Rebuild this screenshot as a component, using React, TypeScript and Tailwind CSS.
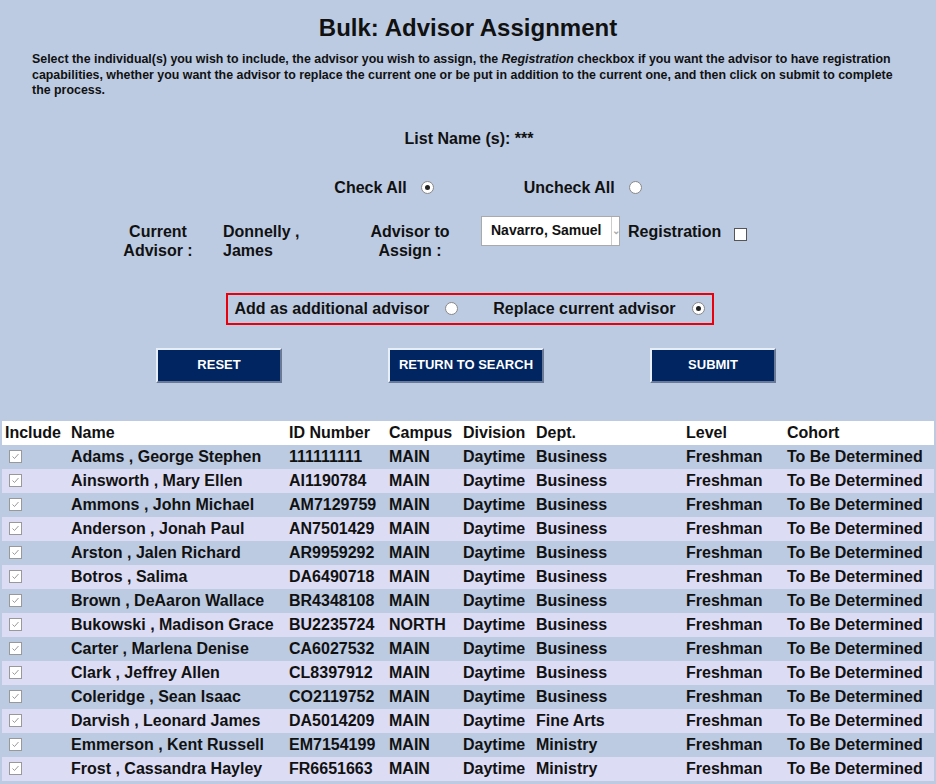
import React from "react";

const rows = [
  ["Adams , George Stephen","111111111","MAIN","Business"],
  ["Ainsworth , Mary Ellen","AI1190784","MAIN","Business"],
  ["Ammons , John Michael","AM7129759","MAIN","Business"],
  ["Anderson , Jonah Paul","AN7501429","MAIN","Business"],
  ["Arston , Jalen Richard","AR9959292","MAIN","Business"],
  ["Botros , Salima","DA6490718","MAIN","Business"],
  ["Brown , DeAaron Wallace","BR4348108","MAIN","Business"],
  ["Bukowski , Madison Grace","BU2235724","NORTH","Business"],
  ["Carter , Marlena Denise","CA6027532","MAIN","Business"],
  ["Clark , Jeffrey Allen","CL8397912","MAIN","Business"],
  ["Coleridge , Sean Isaac","CO2119752","MAIN","Business"],
  ["Darvish , Leonard James","DA5014209","MAIN","Fine Arts"],
  ["Emmerson , Kent Russell","EM7154199","MAIN","Ministry"],
  ["Frost , Cassandra Hayley","FR6651663","MAIN","Ministry"],
];

function Radio({ on }: { on?: boolean }) {
  return (
    <span className="inline-flex w-[13px] h-[13px] rounded-full border border-[#888] bg-white items-center justify-center">
      {on && <span className="w-[5px] h-[5px] rounded-full bg-[#222]" />}
    </span>
  );
}

function Check() {
  return (
    <span className="inline-flex w-[13px] h-[13px] border border-[#999] bg-white items-center justify-center">
      <svg width="9" height="9" viewBox="0 0 9 9"><path d="M1.5 4.5 L3.5 6.5 L7.5 2" stroke="#999" strokeWidth="1" fill="none" /></svg>
    </span>
  );
}

function Btn({ label, w }: { label: string; w: string }) {
  return (
    <button className={`${w} h-[35px] bg-[#002561] text-white text-[13px] font-bold border-2 border-t-[#e8eef8] border-l-[#e8eef8] border-r-[#6a7a96] border-b-[#6a7a96]`}>{label}</button>
  );
}

export default function App() {
  return (
    <div
      className="w-[936px] h-[784px] overflow-hidden bg-[#bccbe2] text-[#111] font-[Liberation_Sans]"
      style={{ fontFamily: '"Liberation Sans", Arial, sans-serif' }}
    >
      <h1 className="text-center text-[24px] font-bold pt-[14px] leading-[28px]">Bulk: Advisor Assignment</h1>
      <p className="px-[32px] mt-[10px] text-[12.4px] font-bold leading-[15.5px]">
        Select the individual(s) you wish to include, the advisor you wish to assign, the <i>Registration</i> checkbox if you want the advisor to have registration capabilities, whether you want the advisor to replace the current one or be put in addition to the current one, and then click on submit to complete the process.
      </p>
      <div className="text-center text-[16px] font-bold mt-[30px] leading-[20px] pl-[2px]">List Name (s): ***</div>
      <div className="flex justify-center items-center gap-[90px] mt-[29px] text-[16px] font-bold leading-[20px] pl-[40px]">
        <span className="flex items-center gap-[14px]">Check All <Radio on /></span>
        <span className="flex items-center gap-[14px]">Uncheck All <Radio /></span>
      </div>
      <div className="flex mt-[24px] text-[16px] font-bold leading-[19px]">
        <div className="ml-[108px] w-[100px] text-center">Current<br />Advisor :</div>
        <div className="ml-[15px] w-[120px]">Donnelly ,<br />James</div>
        <div className="ml-[17px] w-[100px] text-center">Advisor to<br />Assign :</div>
        <div className="ml-[21px] mt-[-6px] flex h-[30px] w-[139px] border border-[#aaa] bg-white">
          <span className="flex-1 px-[9px] flex items-center text-[14px] whitespace-nowrap">Navarro, Samuel</span>
          <span className="w-[15px] border-l border-[#ccc] flex items-center justify-center text-[#aaa] text-[10px]">⌄</span>
        </div>
        <div className="ml-[8px]">Registration</div>
        <span className="ml-[13px] mt-[6px] w-[13px] h-[13px] border border-[#555] bg-white" />
      </div>
      <div className="flex justify-center mt-[33px] pl-[3px]">
        <div className="flex items-center border-2 border-[#e8000d] h-[32px] px-[7px] text-[16px] font-bold">
          <span>Add as additional advisor</span>
          <span className="ml-[16px] flex"><Radio /></span>
          <span className="ml-[35px]">Replace current advisor</span>
          <span className="ml-[16px] flex"><Radio on /></span>
        </div>
      </div>
      <div className="flex mt-[23px]">
        <div className="ml-[156px]"><Btn label="RESET" w="w-[126px]" /></div>
        <div className="ml-[106px]"><Btn label="RETURN TO SEARCH" w="w-[156px]" /></div>
        <div className="ml-[106px]"><Btn label="SUBMIT" w="w-[126px]" /></div>
      </div>
      <table className="mt-[38px] mx-[2px] w-[932px] text-[16px] border-collapse table-fixed">
        <thead>
          <tr className="bg-white h-[24px] font-bold text-left">
            {["Include","Name","ID Number","Campus","Division","Dept.","Level","Cohort"].map((h, i) => (
              <th key={h} className={`font-bold p-0 ${["pl-[3px] w-[69px]","w-[218px]","w-[100px]","w-[74px]","w-[73px]","w-[150px]","w-[101px]",""][i]}`}>{h}</th>
            ))}
          </tr>
        </thead>
        <tbody>
          {rows.map((r, i) => (
            <tr key={i} className={`h-[24px] font-bold ${i % 2 ? "bg-[#dcdcf4]" : "bg-[#bccbe2]"}`}>
              <td className="pl-[7px] p-0 align-middle"><span className="flex"><Check /></span></td>
              <td className="p-0 whitespace-nowrap">{r[0]}</td>
              <td className="p-0">{r[1]}</td>
              <td className="p-0">{r[2]}</td>
              <td className="p-0">Daytime</td>
              <td className="p-0">{r[3]}</td>
              <td className="p-0">Freshman</td>
              <td className="p-0 whitespace-nowrap">To Be Determined</td>
            </tr>
          ))}
        </tbody>
      </table>
    </div>
  );
}
